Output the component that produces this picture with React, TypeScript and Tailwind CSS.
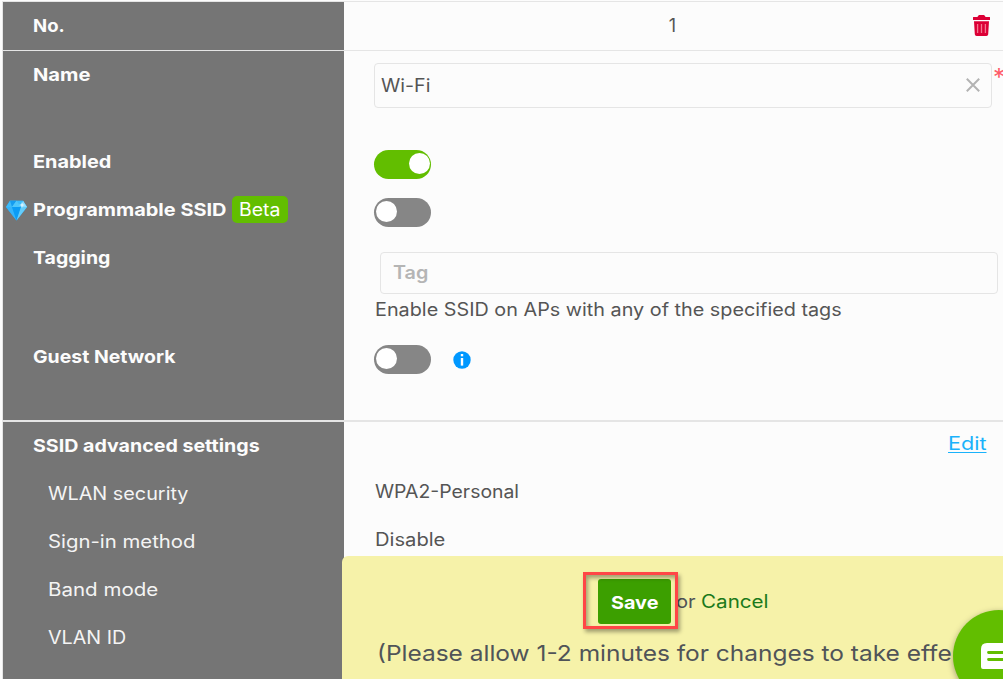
import type { ReactNode } from "react";

function Stretch({ className, children }: { className: string; children: ReactNode }) {
  return <span className={`inline-block origin-left whitespace-nowrap ${className}`}>{children}</span>;
}

function Toggle({ on = false }: { on?: boolean }) {
  return (
    <span
      role="switch"
      aria-checked={on}
      className={`flex h-[29px] w-[57px] shrink-0 rounded-full pt-[3px] ${
        on ? "justify-end bg-[#62be00] pr-px" : "justify-start bg-[#868686] pl-[2px]"
      }`}
    >
      <span className="size-[21px] rounded-full bg-white" />
    </span>
  );
}

function TrashIcon() {
  return (
    <svg width="17" height="21" viewBox="0 0 17 21" className="mb-[2px]" aria-hidden="true">
      <path d="M0 2.3Q0 1.9 .4 1.9H4.4L5.4.4Q5.7 0 6.2 0H10.8Q11.3 0 11.6.4L12.6 1.9H16.6Q17 1.9 17 2.3V5H0Z" fill="#dc0036" />
      <path d="M1 6.2H16L15.2 19.3Q15.1 21 13.4 21H3.6Q1.9 21 1.8 19.3Z" fill="#dc0036" />
      <path d="M4.6 9V18M8.5 9V18M12.4 9V18" stroke="#f4768f" strokeWidth="1.3" />
    </svg>
  );
}

function DiamondIcon() {
  return (
    <svg width="21" height="21" viewBox="0 0 21 21" aria-hidden="true">
      <path d="M4 .8H17L21 7L10.5 20.5L0 7Z" fill="#1fa8fa" />
      <path d="M4 .8H17L21 7H0Z" fill="#3cbcfb" />
      <path d="M0 7H6L10.5 20.5Z" fill="#35b4fa" />
      <path d="M6 7H15L10.5 20.5Z" fill="#0b9cf5" />
      <path d="M15 7H21L10.5 20.5Z" fill="#64cdfc" />
      <path d="M4 .8H10.5L6 7Z" fill="#159cf0" />
      <path d="M10.5 .8L15 7H6Z" fill="#4fc6fb" />
      <path d="M17 .8L15 7H21Z" fill="#8edcff" />
      <path d="M16 2L16.8 4.2L19 5L16.8 5.8L16 8L15.2 5.8L13 5L15.2 4.2Z" fill="#d9f4ff" />
    </svg>
  );
}

function InfoIcon() {
  return (
    <svg width="18" height="18" viewBox="0 0 18 18" aria-hidden="true">
      <circle cx="9" cy="9" r="8.7" fill="#0098ff" />
      <rect x="7.8" y="3" width="2.4" height="2.3" fill="#fff" />
      <rect x="7.8" y="7" width="2.4" height="7.6" fill="#fff" />
    </svg>
  );
}

export default function App() {
  return (
    <div className="relative h-[679px] w-full overflow-hidden bg-[#fcfcfc] pt-px pl-[2px] font-['Inter','Open_Sans',sans-serif] text-[18px] leading-7 text-[#555]">
      <div className="border-l border-[#e5e5e5]">
        <section className="flex h-[50px] border-y border-[#e5e5e5]">
          <div className="flex w-[341px] shrink-0 items-center bg-[#757575] pl-[30px] font-bold text-[#fcfcfc]">
            <Stretch className="scale-x-[1.03]">No.</Stretch>
          </div>
          <div className="flex grow items-center pr-[13px]">
            <span className="grow pl-[28px] text-center">1</span>
            <TrashIcon />
          </div>
        </section>

        <section className="flex h-[371px] border-b-2 border-[#e5e5e5]">
          <div className="flex w-[341px] shrink-0 flex-col bg-[#757575] pl-[30px] font-bold text-[#fcfcfc]">
            <div className="flex h-[47px] items-center">
              <Stretch className="scale-x-[1.12]">Name</Stretch>
            </div>
            <div className="mt-[40px] flex h-12 items-center">
              <Stretch className="scale-x-[1.105]">Enabled</Stretch>
            </div>
            <div className="-ml-[27px] flex h-12 items-center">
              <span className="w-[27px] shrink-0">
                <DiamondIcon />
              </span>
              <Stretch className="w-[199px] scale-x-[1.108]">Programmable SSID</Stretch>
              <span className="mb-[2px] flex h-[27px] w-14 items-center rounded-[5px] bg-[#62be00] pt-[2px] pl-[7px] font-normal text-white">
                <Stretch className="scale-x-[1.08]">Beta</Stretch>
              </span>
            </div>
            <div className="flex h-12 items-center">
              <Stretch className="scale-x-[1.085]">Tagging</Stretch>
            </div>
            <div className="mt-[51px] flex h-12 items-center">
              <Stretch className="scale-x-[1.08]">Guest Network</Stretch>
            </div>
          </div>

          <div className="flex grow flex-col pl-[30px]">
            <div className="mt-3 flex">
              <div className="flex h-[45px] w-[618px] shrink-0 items-center justify-between rounded-[4px] border border-[#e5e5e5] pr-[11px] pl-[6px]">
                <Stretch className="scale-x-[1.09]">Wi-Fi</Stretch>
                <svg width="14" height="14" viewBox="0 0 14 14" className="mb-px" aria-hidden="true">
                  <path d="M.8 .8L13.2 13.2M13.2 .8L.8 13.2" stroke="#b3b3b3" strokeWidth="2" />
                </svg>
              </div>
              <span className="w-[11px] shrink-0 pl-px text-[24px] leading-[30px] text-[#ff5a68]">*</span>
            </div>
            <div className="mt-[42px] flex">
              <Toggle on />
            </div>
            <div className="mt-[19px] flex">
              <Toggle />
            </div>
            <div className="mt-[25px] ml-[6px] flex h-[42px] w-[618px] items-center rounded-[4px] border border-[#e5e5e5] pl-3 font-semibold text-[#b5b5b5]">
              <Stretch className="scale-x-[1.1]">Tag</Stretch>
            </div>
            <div className="mt-[2px] pl-px">
              <Stretch className="scale-x-[1.1]">Enable SSID on APs with any of the specified tags</Stretch>
            </div>
            <div className="mt-[21px] flex items-center gap-[22px]">
              <Toggle />
              <InfoIcon />
            </div>
          </div>
        </section>

        <section className="flex h-[257px]">
          <div className="flex w-[341px] shrink-0 flex-col bg-[#757575] pl-[45px] text-[#f4f4f4]">
            <div className="mb-px -ml-[15px] flex h-[47px] shrink-0 items-center font-bold text-[#fcfcfc]">
              <Stretch className="scale-x-[1.09]">SSID advanced settings</Stretch>
            </div>
            <div className="flex h-12 shrink-0 items-center">
              <Stretch className="scale-x-[1.1]">WLAN security</Stretch>
            </div>
            <div className="flex h-12 shrink-0 items-center">
              <Stretch className="scale-x-[1.13]">Sign-in method</Stretch>
            </div>
            <div className="flex h-12 shrink-0 items-center">
              <Stretch className="scale-x-[1.14]">Band mode</Stretch>
            </div>
            <div className="flex h-12 shrink-0 items-center">
              <Stretch className="scale-x-[1.095]">VLAN ID</Stretch>
            </div>
            <div className="flex h-12 shrink-0 items-center pt-[2px]">
              <Stretch className="scale-x-[1.1]">Rate limiting</Stretch>
            </div>
          </div>
          <div className="flex grow flex-col pl-[30px]">
            <div className="mb-[3px] flex h-[43px] items-center justify-end pr-[23px]">
              <a className="inline-block origin-left scale-x-[1.2] text-[#1ab2fb] underline underline-offset-2">Edit</a>
            </div>
            <div className="flex h-12 items-center pl-px">
              <Stretch className="scale-x-[1.078]">WPA2-Personal</Stretch>
            </div>
            <div className="flex h-12 items-center pl-px">
              <Stretch className="scale-x-[1.12]">Disable</Stretch>
            </div>
          </div>
        </section>
      </div>

      <div className="absolute top-[556px] right-0 bottom-0 left-[342px] overflow-hidden rounded-tl-[6px] bg-[#f6f2a9] text-[#505458]">
        <div className="flex pt-[23px] pl-[256px]">
          <button className="flex h-[45px] w-[73px] items-center rounded-[3px] bg-[#3c9f00] pt-[2px] pl-[13px] font-bold text-white">
            <Stretch className="scale-x-[1.1]">Save</Stretch>
          </button>
          <div className="flex h-[45px] items-center pl-[5px]">
            <Stretch className="w-[25px] scale-x-[1.12]">or</Stretch>
            <Stretch className="scale-x-[1.145] text-[#1b7a1b]">Cancel</Stretch>
          </div>
        </div>
        <p className="mt-[13px] pl-[35px] text-[22px] leading-8">
          <Stretch className="scale-x-[1.112]">(Please allow 1-2 minutes for changes to take effe</Stretch>
        </p>
      </div>

      <div className="absolute top-[572px] left-[583px] h-[57px] w-[95px] border-[3px] border-[#ff4646] shadow-[2px_3px_4px_rgba(0,0,0,0.35),inset_2px_3px_4px_rgba(0,0,0,0.35)]" />

      <div className="absolute top-[610px] left-[953px] flex size-[92px] rounded-full bg-[#62be00] pt-[33px] pl-7 shadow-[0_2px_6px_rgba(0,0,0,0.35)]">
        <svg width="36" height="32" viewBox="0 0 36 32" aria-label="Chat">
          <path d="M6 0H30Q36 0 36 6V32L29 26H2Q0 26 0 24V6Q0 0 6 0Z" fill="#fff" />
          <path d="M7.5 9.5H28.5M7.5 16.5H28.5" stroke="#62be00" strokeWidth="2.8" strokeLinecap="round" />
        </svg>
      </div>
    </div>
  );
}
